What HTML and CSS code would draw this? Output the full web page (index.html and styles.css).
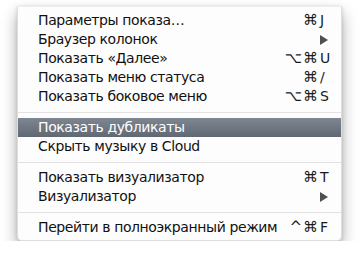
FILE: index.html
```html
<!DOCTYPE html>
<html lang="ru">
<head>
<meta charset="utf-8">
<link rel="stylesheet" href="styles.css">
</head>
<body>
<div class="menu">
  <div class="item"><span class="label">Параметры показа…</span><span class="sc"><span class="mod">⌘</span><span class="key">J</span></span></div>
  <div class="item"><span class="label">Браузер колонок</span><span class="arrow"></span></div>
  <div class="item"><span class="label">Показать «Далее»</span><span class="sc"><span class="mod">⌥⌘</span><span class="key">U</span></span></div>
  <div class="item"><span class="label">Показать меню статуса</span><span class="sc"><span class="mod">⌘</span><span class="key">/</span></span></div>
  <div class="item"><span class="label">Показать боковое меню</span><span class="sc"><span class="mod">⌥⌘</span><span class="key">S</span></span></div>
  <div class="sep"></div>
  <div class="item active"><span class="label">Показать дубликаты</span></div>
  <div class="item"><span class="label">Скрыть музыку в Cloud</span></div>
  <div class="sep"></div>
  <div class="item"><span class="label">Показать визуализатор</span><span class="sc"><span class="mod">⌘</span><span class="key">T</span></span></div>
  <div class="item"><span class="label">Визуализатор</span><span class="arrow"></span></div>
  <div class="sep"></div>
  <div class="item"><span class="label">Перейти в полноэкранный режим</span><span class="sc"><span class="mod">^⌘</span><span class="key">F</span></span></div>
</div>
</body>
</html>
```
FILE: styles.css
```css
html, body {
  margin: 0;
  padding: 0;
  background: #ffffff;
}
body {
  padding: 6px 0 0 17px;
  font-family: "DejaVu Sans", "Liberation Sans", sans-serif;
}
.menu {
  width: 325px;
  box-sizing: border-box;
  background: #fdfdfd;
  border: 1px solid #dedede;
  border-top-color: #eeeeee;
  border-radius: 0 0 5px 5px;
  padding: 4px 0 3px 0;
  box-shadow: 0 8px 16px rgba(0, 0, 0, 0.32), 0 1px 4px rgba(0, 0, 0, 0.14);
}
.item {
  height: 19px;
  display: flex;
  align-items: center;
  padding: 0 11px 0 20px;
  font-size: 14px;
  letter-spacing: -0.4px;
  color: #111111;
  line-height: 19px;
}
.item.active {
  background: linear-gradient(#7d8691, #5f6873);
  color: #ffffff;
}
.label {
  flex: 1;
  white-space: nowrap;
}
.sc {
  display: flex;
  align-items: center;
  color: #1a1a1a;
  letter-spacing: 0;
}
.mod {
  text-align: right;
  font-size: 15px;
  letter-spacing: 1px;
}
.key {
  width: 10px;
  text-align: left;
  margin-left: 1px;
}
.arrow {
  width: 0;
  height: 0;
  border-top: 5px solid transparent;
  border-bottom: 5px solid transparent;
  border-left: 8px solid #4f4f4f;
  margin-right: 2px;
}
.sep {
  height: 1px;
  background: #e2e2e2;
  margin: 6px 0 5px 0;
}
```
